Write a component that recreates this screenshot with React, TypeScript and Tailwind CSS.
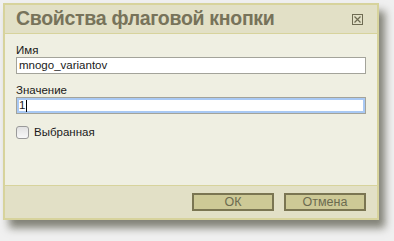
import React from "react";

export default function App() {
  return (
    <div className="w-[394px] h-[241px] bg-[#f0f0f0] pt-[3px] pl-[3px]" style={{ fontFamily: '"Liberation Sans", Arial, sans-serif' }}>
      <div className="w-[376px] h-[217px] border-2 border-[#d7d39c] bg-[#efefe2] flex flex-col shadow-[6px_8px_8px_rgba(40,40,20,0.55)]">
        <div className="h-[29px] bg-[#e2e0c6] border-b border-[#d7d39c] flex items-center justify-between pl-[11px] pr-[14px] shrink-0">
          <span className="text-[19.5px] font-bold text-[#77735a] leading-none tracking-[-0.3px]">Свойства флаговой кнопки</span>
          <svg width="11" height="11" viewBox="0 0 11 11" className="mt-[1px]">
            <rect x="0.5" y="0.5" width="10" height="10" fill="none" stroke="#6e6b52" strokeWidth="1" />
            <path d="M2.5 2.5 L8.5 8.5 M8.5 2.5 L2.5 8.5" stroke="#6e6b52" strokeWidth="1.2" />
          </svg>
        </div>
        <div className="flex-1 pl-[11px] pr-[10px] pt-[9px] flex flex-col text-[11px] text-[#1a1a1a]">
          <label className="leading-[14px] h-[14px] text-[11.5px]">Имя</label>
          <div className="h-[17px] w-[350px] bg-white border border-[#a3a39a] flex items-center px-[2px] leading-none text-[11.5px]">mnogo_variantov</div>
          <label className="leading-[14px] h-[14px] mt-[9px] text-[11.5px]">Значение</label>
          <div className="h-[17px] w-[350px] bg-white border border-[#a3a39a] flex items-center leading-none text-[11.5px]">
            <div className="h-full w-full border-2 border-[#a9c9f4] flex items-center">
              <span>1</span>
              <span className="w-[1px] h-[12px] bg-black ml-[1px]" />
            </div>
          </div>
          <div className="flex items-center mt-[11px] gap-[5px]">
            <div className="w-[13px] h-[13px] rounded-[3px] border border-[#9a9a9a] bg-gradient-to-b from-[#e2e2e2] to-[#f8f8f8]" />
            <span className="leading-[14px] text-[11.5px]">Выбранная</span>
          </div>
        </div>
        <div className="h-[33px] bg-[#e2e0c6] border-t border-[#d7d39c] flex items-center justify-end gap-[10px] pr-[11px] shrink-0">
          <button className="w-[82px] h-[18px] bg-[#cdc996] border-2 border-[#7a7552] text-[12.5px] text-[#6c6b50] leading-none">ОК</button>
          <button className="w-[82px] h-[18px] bg-[#cdc996] border-2 border-[#7a7552] text-[12.5px] text-[#6c6b50] leading-none">Отмена</button>
        </div>
      </div>
    </div>
  );
}
